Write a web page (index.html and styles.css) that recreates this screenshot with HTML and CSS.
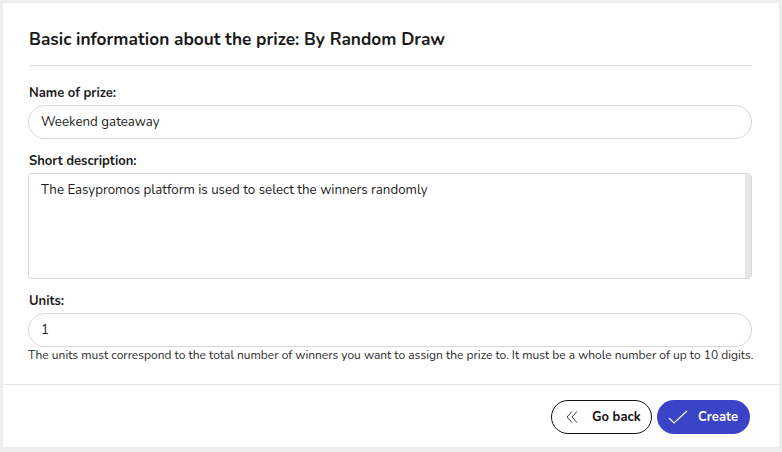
FILE: index.html
```html
<!DOCTYPE html>
<html lang="en">
<head>
<meta charset="utf-8">
<title>Prize</title>
<link rel="stylesheet" href="styles.css">
</head>
<body>
<div class="card">
  <div class="body">
    <h1 class="title">Basic information about the prize: By Random Draw</h1>
    <div class="field first">
      <label class="label">Name of prize:</label>
      <input class="input" type="text" value="Weekend gateaway">
    </div>
    <div class="field">
      <label class="label">Short description:</label>
      <div class="textbox">
        <textarea class="textarea">The Easypromos platform is used to select the winners randomly</textarea>
        <div class="scrollbar"></div>
      </div>
    </div>
    <div class="field">
      <label class="label">Units:</label>
      <input class="input" type="text" value="1">
      <p class="help">The units must correspond to the total number of winners you want to assign the prize to. It must be a whole number of up to 10 digits.</p>
    </div>
  </div>
  <div class="footer">
    <button class="btn btn-back" type="button">
      <svg class="ico" width="12" height="14" viewBox="0 0 12 14"><path d="M6 1.5 L1 7 L6 12.5 M11 1.5 L6 7 L11 12.5" fill="none" stroke="#222" stroke-width="0.9"/></svg>
      <span>Go back</span>
    </button>
    <button class="btn btn-create" type="button">
      <svg class="ico" width="20" height="14" viewBox="0 0 20 14"><path d="M1 8 L6 13 L19 1" fill="none" stroke="#fff" stroke-width="1.1"/></svg>
      <span>Create</span>
    </button>
  </div>
</div>
</body>
</html>
```
FILE: styles.css
```css
* { box-sizing: border-box; }
html, body { margin: 0; padding: 0; }
body {
  background: #eeeeee;
  font-family: "Nunito", "Lato", "Open Sans", sans-serif;
  color: #1c1c1c;
  width: 782px;
  height: 452px;
  padding: 3px;
}
.card {
  background: #fff;
  width: 776px;
  height: 444px;
  display: flex;
  flex-direction: column;
}
.body {
  padding: 26px 27px 0 25px;
  flex: 1;
}
.title {
  margin: 0 0 0 1px;
  font-size: 17.3px;
  line-height: 22px;
  font-weight: 700;
  padding-bottom: 14px;
  border-bottom: 1px solid #dcdcdc;
  color: #1a1a1a;
}
.field { display: flex; flex-direction: column; margin-top: 13px; }
.field.first { margin-top: 18px; }
.label {
  font-size: 13px;
  line-height: 18px;
  font-weight: 700;
  margin-bottom: 3px;
  padding-left: 1px;
}
.input {
  height: 34px;
  border: 1px solid #d8d8d8;
  border-radius: 17px;
  padding: 0 12px;
  font-family: inherit;
  font-size: 13.3px;
  color: #1c1c1c;
  outline: none;
  background: #fff;
}
.textbox {
  height: 106px;
  border: 1px solid #d6d6d6;
  border-radius: 4px;
  display: flex;
  overflow: hidden;
}
.textarea {
  flex: 1;
  border: none;
  padding: 7px 12px;
  font-family: inherit;
  font-size: 13.3px;
  line-height: 18px;
  color: #1c1c1c;
  resize: none;
  outline: none;
}
.scrollbar {
  width: 6px;
  background: #e6e6e6;
  flex: none;
}
.help {
  margin: 1px 0 0 0;
  font-size: 12px;
  line-height: 14px;
  color: #2a2a2a;
  white-space: nowrap;
}
.footer {
  border-top: 1px solid #e4e4e4;
  display: flex;
  justify-content: flex-end;
  gap: 5px;
  padding: 15px 29px 13px 0;
}
.btn {
  height: 34px;
  border-radius: 17px;
  font-family: inherit;
  font-size: 13px;
  font-weight: 700;
  display: flex;
  align-items: center;
  cursor: pointer;
}
.btn-back {
  width: 101px;
  border: 1px solid #111;
  background: #fff;
  color: #111;
  padding: 0 0 0 14px;
  gap: 14px;
}
.btn-create {
  width: 93px;
  border: none;
  background: #3b44c7;
  color: #fff;
  padding: 0 0 0 11px;
  gap: 10px;
}
.ico { display: block; flex: none; }
```
